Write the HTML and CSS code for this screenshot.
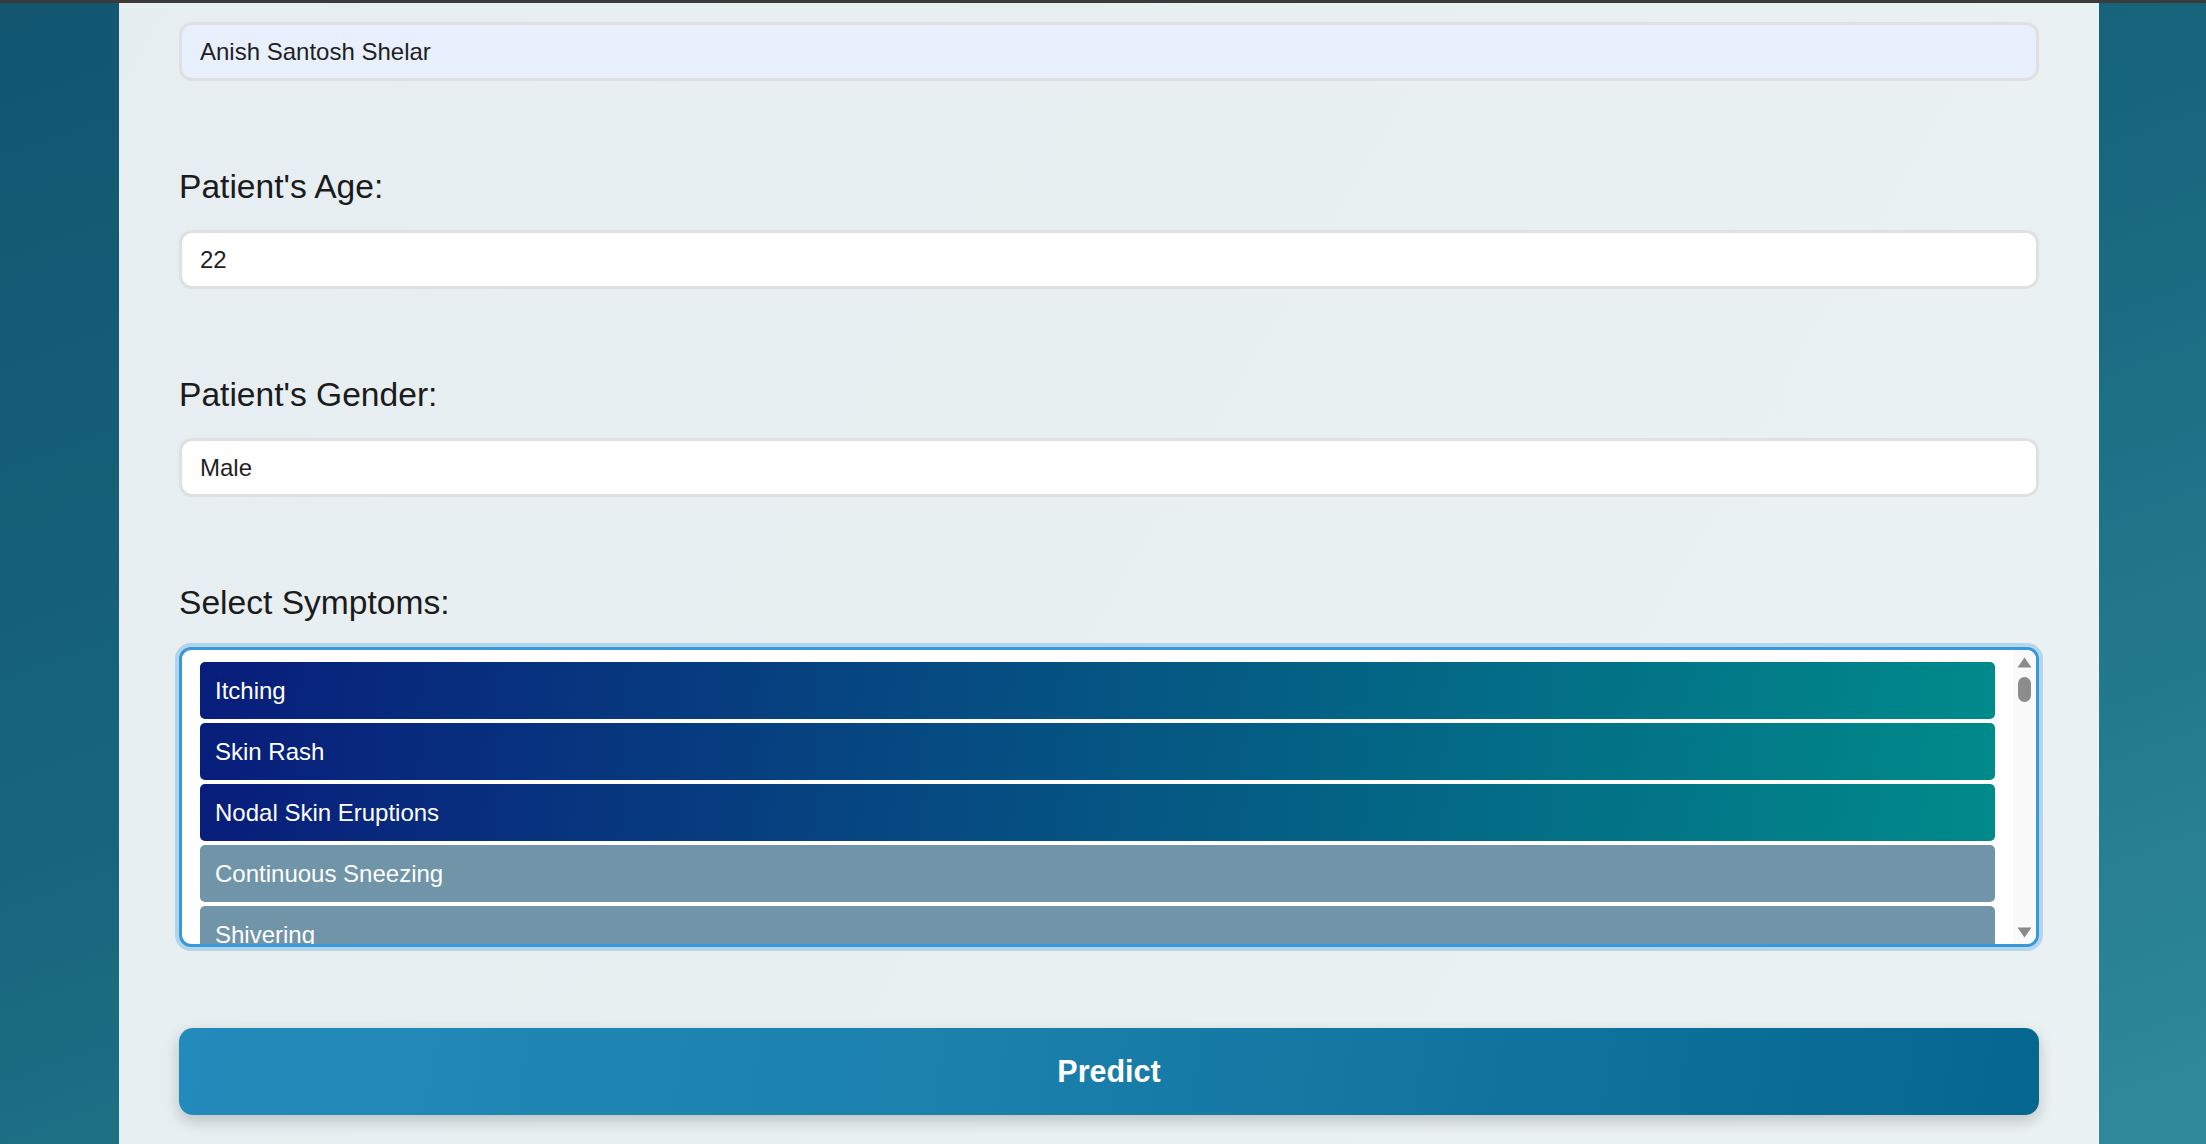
FILE: index.html
```html
<!DOCTYPE html>
<html lang="en">
<head>
<meta charset="utf-8">
<title>Disease Prediction</title>
<link rel="stylesheet" href="styles.css">
</head>
<body>
<div class="topbar"></div>
<main class="card">
  <div class="field first">
    <div class="input autofill">Anish Santosh Shelar</div>
  </div>
  <div class="field">
    <label class="label">Patient's Age:</label>
    <div class="input">22</div>
  </div>
  <div class="field">
    <label class="label">Patient's Gender:</label>
    <div class="input">Male</div>
  </div>
  <div class="field">
    <label class="label label-select">Select Symptoms:</label>
    <div class="listbox">
      <div class="options">
        <div class="option selected">Itching</div>
        <div class="option selected">Skin Rash</div>
        <div class="option selected">Nodal Skin Eruptions</div>
        <div class="option">Continuous Sneezing</div>
        <div class="option">Shivering</div>
      </div>
      <div class="scrollbar">
        <svg class="arrow" width="15" height="11" viewBox="0 0 15 11"><path d="M7.5 0.5 L14.5 10.5 L0.5 10.5 Z" fill="#8a8a8a"/></svg>
        <div class="thumb"></div>
        <div class="spacer"></div>
        <svg class="arrow" width="15" height="11" viewBox="0 0 15 11"><path d="M0.5 0.5 L14.5 0.5 L7.5 10.5 Z" fill="#8a8a8a"/></svg>
      </div>
    </div>
  </div>
  <button class="predict">Predict</button>
</main>
</body>
</html>
```

FILE: styles.css
```css
html, body {
  margin: 0;
  padding: 0;
  height: 100%;
  overflow: hidden;
}

body {
  background: linear-gradient(160deg, #125670 0%, #17657c 45%, #2e8a9a 100%);
  font-family: "Liberation Sans", Arial, sans-serif;
}

.topbar {
  height: 3px;
  background: #3b3b3b;
}

.card {
  margin-left: 119px;
  width: 1980px;
  box-sizing: border-box;
  padding: 19px 60px 60px 60px;
  background: linear-gradient(120deg, #e6eef1 0%, #e8f0f2 55%, #ebf2f4 100%);
  min-height: 1200px;
}

.field {
  display: flex;
  flex-direction: column;
  margin-bottom: 85px;
}

.label {
  font-size: 33.6px;
  line-height: 39px;
  height: 39px;
  color: #1b1b1b;
  margin-top: 1px;
  margin-bottom: 24px;
}

.label-select {
  margin-bottom: 25px;
}

.input {
  height: 59px;
  box-sizing: border-box;
  border: 3px solid #dfe0e1;
  border-radius: 13px;
  background: #ffffff;
  padding: 0 18px;
  display: flex;
  align-items: center;
  font-size: 24px;
  color: #1f1f1f;
}

.input.autofill {
  background: #e8f0fe;
}

.listbox {
  height: 300px;
  box-sizing: border-box;
  border: 3px solid #3898dc;
  border-radius: 12px;
  box-shadow: 0 0 0 4px rgba(52, 152, 219, 0.3);
  background: #ffffff;
  display: flex;
  overflow: hidden;
}

.options {
  flex: 1;
  padding: 12px 18px 0 18px;
  display: flex;
  flex-direction: column;
  gap: 4px;
  overflow: hidden;
}

.option {
  flex: 0 0 57px;
  height: 57px;
  border-radius: 5px;
  background: #7094a8;
  color: #ffffff;
  font-size: 24px;
  display: flex;
  align-items: center;
  padding-left: 15px;
}

.option.selected {
  background: linear-gradient(100deg, #081d7b 0%, #055483 50%, #008a8a 100%);
}

.scrollbar {
  width: 23px;
  background: #f9f9f9;
  display: flex;
  flex-direction: column;
  align-items: center;
  padding: 7px 0 6px 0;
  box-sizing: border-box;
}

.arrow {
  display: block;
  flex: 0 0 auto;
}

.thumb {
  width: 13px;
  height: 25px;
  border-radius: 7px;
  background: #8c8c8c;
  margin-top: 9px;
}

.spacer {
  flex: 1;
}

.predict {
  display: block;
  width: 100%;
  height: 87px;
  margin-top: -4px;
  border: none;
  border-radius: 14px;
  background: linear-gradient(100deg, #238bbb 0%, #1a7fab 45%, #05678f 100%);
  color: #ffffff;
  font-family: "Liberation Sans", Arial, sans-serif;
  font-weight: bold;
  font-size: 30.5px;
  box-shadow: 0 6px 16px rgba(0, 0, 0, 0.2);
  cursor: pointer;
}
```
